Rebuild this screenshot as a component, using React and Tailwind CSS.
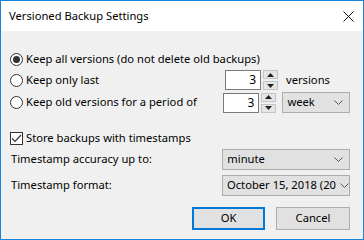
import React from 'react';

const font = { fontFamily: '"Noto Sans", "Liberation Sans", sans-serif' };

const Radio = ({ checked, label }) => (
  <div className="flex items-center h-[20px]">
    <div className="w-[13px] h-[13px] rounded-full border border-[#333] bg-white flex items-center justify-center">
      {checked && <div className="w-[7px] h-[7px] rounded-full bg-[#333]" />}
    </div>
    <span className="ml-[3px]">{label}</span>
  </div>
);

const Spin = ({ value }) => (
  <div className="flex items-center">
    <div className="w-[36px] h-[20px] bg-white border border-[#7a7a7a] flex items-center justify-end pr-[4px] text-[12px]">
      {value}
    </div>
    <div className="ml-[2px] w-[15px] h-[20px] flex flex-col justify-between">
      <div className="h-[9px] bg-[#e5e5e5] border border-[#c4c4c4] flex items-center justify-center">
        <svg width="7" height="4" viewBox="0 0 7 4"><path d="M3.5 0 L7 4 L0 4 Z" fill="#222" /></svg>
      </div>
      <div className="h-[9px] bg-[#e5e5e5] border border-[#c4c4c4] flex items-center justify-center">
        <svg width="7" height="4" viewBox="0 0 7 4"><path d="M0 0 L7 0 L3.5 4 Z" fill="#222" /></svg>
      </div>
    </div>
  </div>
);

const Select = ({ value, className }) => (
  <div className={`h-[21px] bg-[#e1e1e1] border border-[#adadad] flex items-center pl-[4px] pr-[6px] ${className}`}>
    <span className="flex-1 whitespace-nowrap">{value}</span>
    <svg width="9" height="5" viewBox="0 0 9 5" className="ml-[4px] shrink-0">
      <path d="M0.5 0.5 L4.5 4.5 L8.5 0.5" stroke="#555" strokeWidth="1" fill="none" />
    </svg>
  </div>
);

export default function App() {
  return (
    <div className="w-[364px] h-[240px] border border-[#1883d7] flex flex-col text-[11.2px] text-black bg-[#f0f0f0]" style={font}>
      {/* Title bar */}
      <div className="h-[30px] bg-white flex items-center justify-between pl-[8px] pr-[9px]">
        <span>Versioned Backup Settings</span>
        <svg width="11" height="11" viewBox="0 0 11 11">
          <path d="M0.5 0.5 L10.5 10.5 M10.5 0.5 L0.5 10.5" stroke="#111" strokeWidth="1" />
        </svg>
      </div>

      <div className="flex-1 flex flex-col pl-[9px] pr-[13px] pt-[18px]">
        <Radio checked label="Keep all versions (do not delete old backups)" />

        <div className="flex items-center mt-[1px] h-[20px]">
          <div className="w-[215px]"><Radio label="Keep only last" /></div>
          <Spin value="3" />
          <span className="ml-[8px]">versions</span>
        </div>

        <div className="flex items-center mt-[2px] h-[21px]">
          <div className="w-[215px]"><Radio label="Keep old versions for a period of" /></div>
          <Spin value="3" />
          <Select value="week" className="ml-[6px] w-[68px]" />
        </div>

        <div className="flex items-center h-[20px] mt-[15px]">
          <div className="w-[13px] h-[13px] border border-[#333] bg-white flex items-center justify-center">
            <svg width="11" height="9" viewBox="0 0 11 9">
              <path d="M1 4.5 L4 7.5 L10 1" stroke="#333" strokeWidth="1.2" fill="none" />
            </svg>
          </div>
          <span className="ml-[3px]">Store backups with timestamps</span>
        </div>

        <div className="flex items-center h-[21px] mt-[1px]">
          <span className="w-[213px] pl-[1px]">Timestamp accuracy up to:</span>
          <Select value="minute" className="w-[128px]" />
        </div>

        <div className="flex items-center h-[21px] mt-[5px]">
          <span className="w-[213px] pl-[1px]">Timestamp format:</span>
          <Select value="October 15, 2018 (20" className="w-[128px]" />
        </div>

        <div className="flex justify-end gap-[11px] mt-[11px]">
          <button className="w-[73px] h-[23px] bg-[#e1e1e1] border-2 border-[#0078d7]">OK</button>
          <button className="w-[74px] h-[23px] bg-[#e1e1e1] border border-[#adadad]">Cancel</button>
        </div>
      </div>
    </div>
  );
}
